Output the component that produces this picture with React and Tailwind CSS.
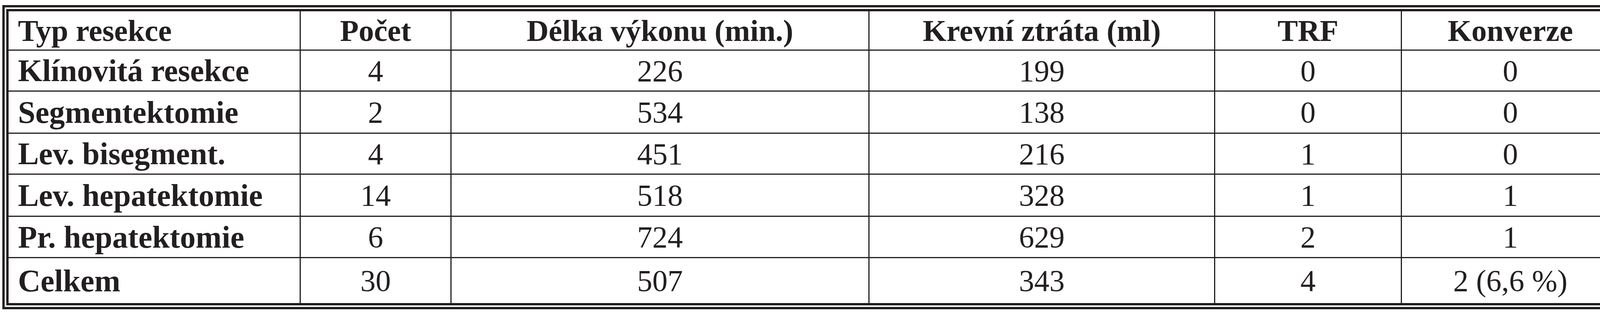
import React from "react";

const head = ["Typ resekce", "Počet", "Délka výkonu (min.)", "Krevní ztráta (ml)", "TRF", "Konverze"];

const rows = [
  ["Klínovitá resekce", "4", "226", "199", "0", "0"],
  ["Segmentektomie", "2", "534", "138", "0", "0"],
  ["Lev. bisegment.", "4", "451", "216", "1", "0"],
  ["Lev. hepatektomie", "14", "518", "328", "1", "1"],
  ["Pr. hepatektomie", "6", "724", "629", "2", "1"],
  ["Celkem", "30", "507", "343", "4", "2 (6,6 %)"],
];

const Cell = ({ text, col, last, bold, big }) => {
  const edge = col === 5 ? "" : "border-r-[3px]";
  const bottom = last ? "" : "border-b-[3px]";
  const align = col === 0 ? "justify-start pl-[24px]" : "justify-center";
  const weight = bold ? "font-bold" : "font-normal";
  const size = big ? "text-[80px]" : "text-[78px]";
  return (
    <div className={`flex items-center border-[#231f20] whitespace-nowrap ${edge} ${bottom} ${align} ${weight} ${size}`}>
      {text}
    </div>
  );
};

export default function App() {
  return (
    <div className="w-[4170px] h-[800px] bg-white pt-[13px] pl-[6px] font-['Liberation_Serif',serif] text-[#231f20]">
      <div className="w-[4154px] border-[6px] border-[#231f20] p-[4px]">
        <div className="border-[6px] border-[#231f20] grid grid-cols-[748px_386px_1070px_885px_478px_555px] grid-rows-[101px_105px_108px_105px_108px_106px_115px]">
          {head.map((h, i) => (
            <Cell key={"h" + i} text={h} col={i} bold />
          ))}
          {rows.map((r, ri) =>
            r.map((c, ci) => (
              <Cell
                key={ri + "-" + ci}
                text={c}
                col={ci}
                bold={ci === 0}
                big={ci === 0}
                last={ri === rows.length - 1}
              />
            ))
          )}
        </div>
      </div>
    </div>
  );
}
